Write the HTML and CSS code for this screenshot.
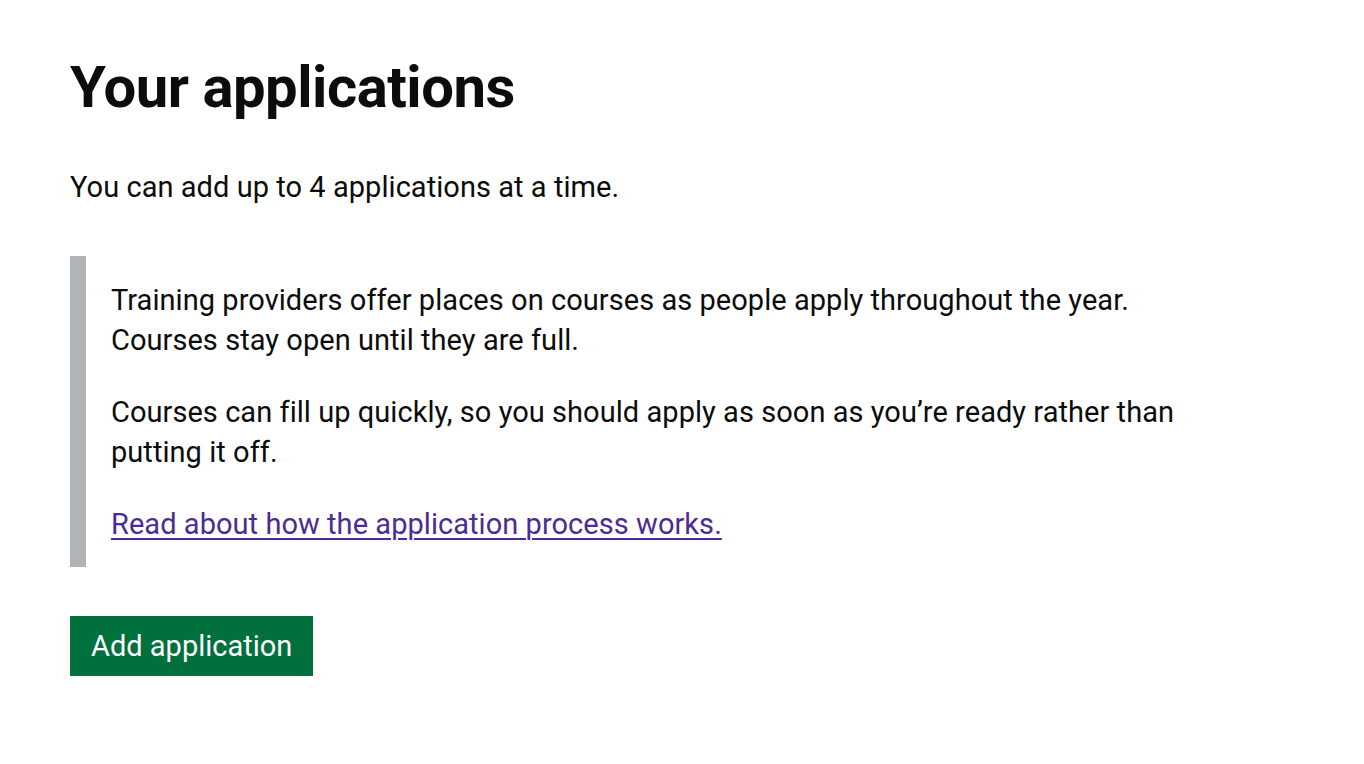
FILE: index.html
```html
<!DOCTYPE html>
<html lang="en">
<head>
<meta charset="utf-8">
<title>Your applications</title>
<link rel="stylesheet" href="styles.css">
</head>
<body>
<main class="page">
  <h1 class="heading">Your applications</h1>
  <p class="body">You can add up to 4 applications at a time.</p>
  <div class="inset">
    <p class="body">Training providers offer places on courses as people apply throughout the year. Courses stay open until they are full.</p>
    <p class="body">Courses can fill up quickly, so you should apply as soon as you’re ready rather than putting it off.</p>
    <p class="body last"><a class="link" href="#">Read about how the application process works.</a></p>
  </div>
  <a class="button" href="#">Add application</a>
</main>
</body>
</html>
```

FILE: styles.css
```css
* { box-sizing: border-box; }
html, body { margin: 0; padding: 0; background: #ffffff; }
body {
  font-family: Roboto, "Liberation Sans", Arial, sans-serif;
  color: #0b0c0c;
}
.page {
  padding: 55px 70px 0 70px;
}
.heading {
  margin: 0 0 48px 0;
  font-size: 58px;
  line-height: 64px;
  font-weight: 700;
  letter-spacing: -0.5px;
}
.body {
  margin: 0 0 32px 0;
  font-size: 29px;
  line-height: 40px;
  letter-spacing: 0.05px;
}
.page > .body { margin-bottom: 49px; }
.inset {
  max-width: 1130px;
  border-left: 16px solid #b1b4b6;
  padding: 24px 25px 23px 25px;
  margin-bottom: 49px;
}
.inset .last { margin-bottom: 0; }
.link {
  color: #4c2c92;
  text-decoration: underline;
  text-decoration-thickness: 2px;
  text-underline-offset: 4px;
}
.button {
  display: inline-block;
  background: #00703c;
  color: #ffffff;
  text-decoration: none;
  font-size: 29px;
  line-height: 36px;
  padding: 12px 21px 12px 21px;
  box-shadow: 0 3px 0 #002d18;
}
```
